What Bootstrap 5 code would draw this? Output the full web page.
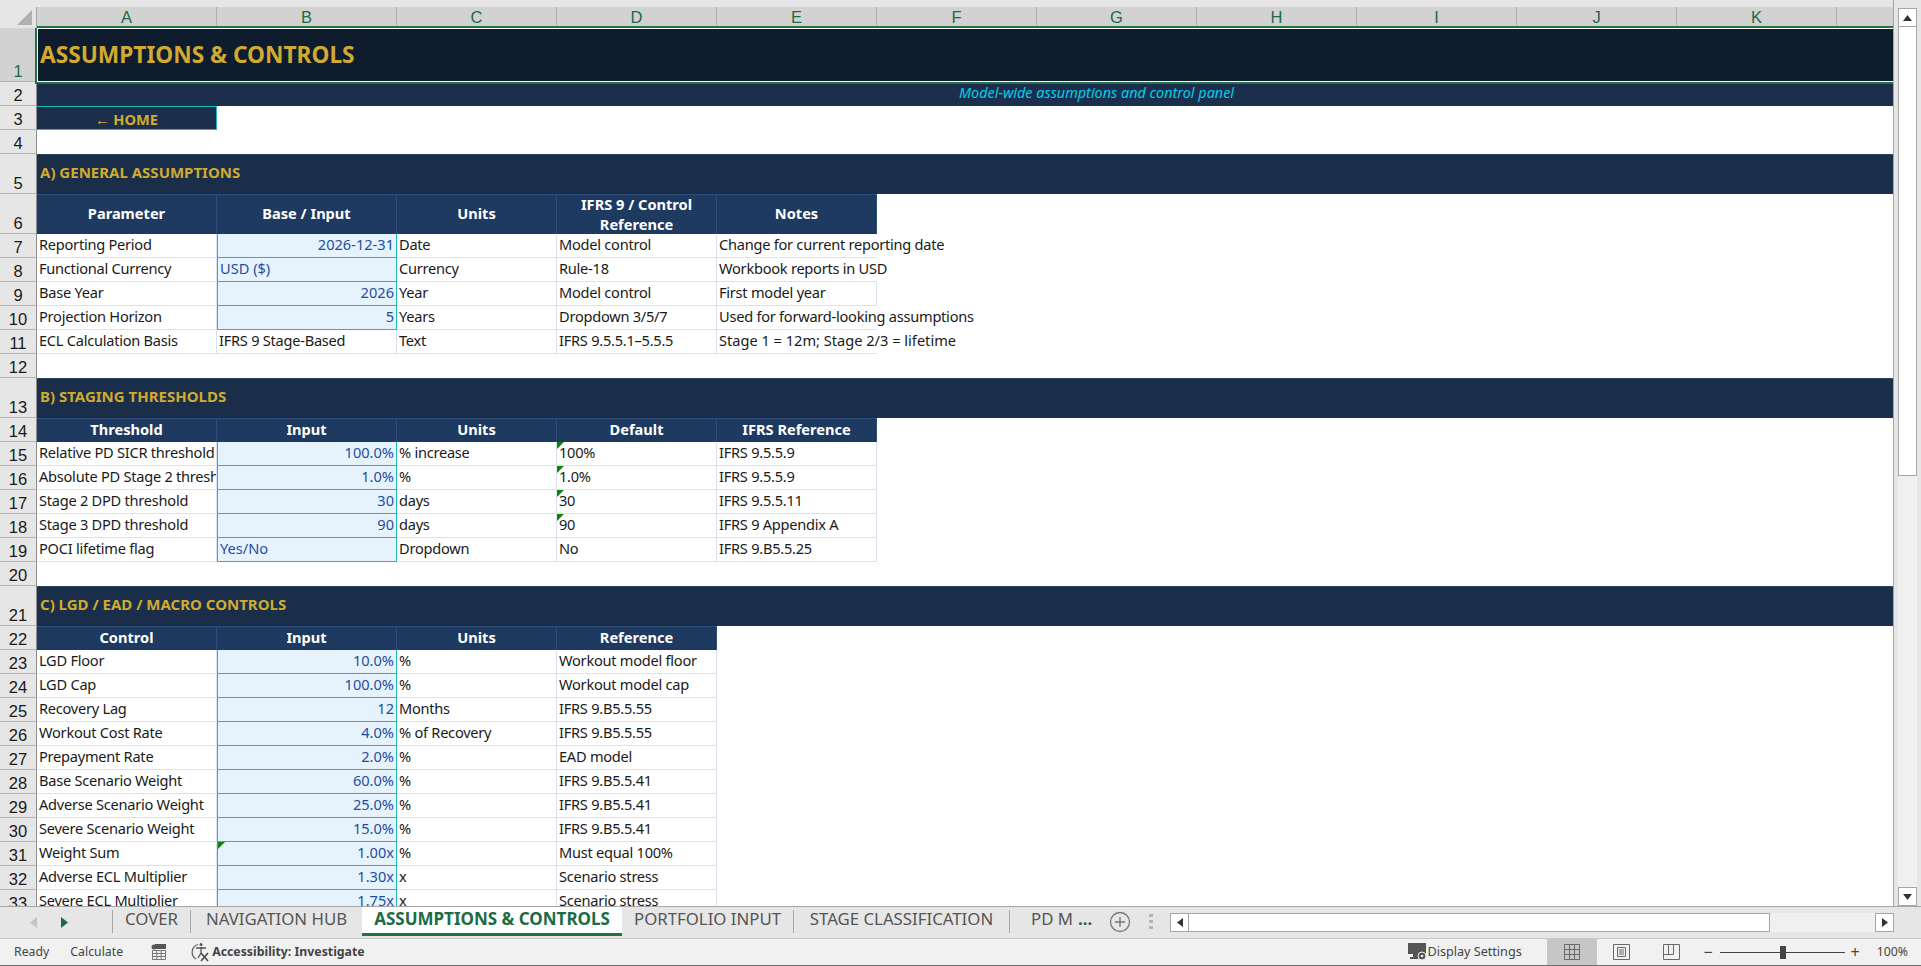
<!DOCTYPE html>
<html lang="en">
<head>
<meta charset="UTF-8">
<title>Assumptions &amp; Controls</title>
<link href="https://cdn.jsdelivr.net/npm/bootstrap@5.3.0/dist/css/bootstrap.min.css" rel="stylesheet">
<style>
    html, body { height: 966px; overflow: hidden; }
    body { background: #e6e6e6; font-family: "Noto Sans", "Liberation Sans", sans-serif; font-size: 14.6px; color: #1a1a1a; }
    .sheet-wrap { height: 906px; width: 1894px; overflow: hidden; background: #fff; border-right: 1px solid #a6a6a6; }
    .top-strip { height: 7px; background: #e6e6e6; }
    .sheet { table-layout: fixed; width: 1894px; border-collapse: separate; border-spacing: 0; }
    .sheet td, .sheet th { padding: 0 2px 1px; white-space: nowrap; height: 24px; vertical-align: middle; }
    .sheet td { font-weight: 400; }
    .ch { height: 21px !important; background: #d2d2d2; color: #1c6b45; font: 400 16.5px "Liberation Sans", sans-serif; text-align: center; border-right: 1px solid #b0b0b0; }
    .corner { background: #e6e6e6; border-right: 1px solid #a6a6a6; position: relative; }
    .corner::after { content: ""; position: absolute; right: 4px; bottom: 3px; border-style: solid; border-width: 0 0 15px 15px; border-color: transparent transparent #b0b0b0 transparent; }
    .rh { background: #e6e6e6; color: #1a1a1a; font: 400 16.5px "Liberation Sans", sans-serif; text-align: center; vertical-align: bottom !important; padding: 0 !important; border-right: 1px solid #8e8e8e; border-bottom: 1px solid #b4b4b4; line-height: 20px; }
    .rh-on { background: #d2d2d2; color: #1c6b45; }
    .r54 td, .r54 th { height: 54px; }
    .r40 td, .r40 th { height: 40px; }
    .sheet .ttl { background: #0f1c2e; color: #d1aa30; font-weight: 700; font-size: 22.7px; box-shadow: inset 0 0 0 1px #fff; outline: 2px solid #217346; padding-left: 3px; padding-bottom: 0; }
    .sheet .sub { background: #1b2f4d; color: #00d0e8; font-style: italic; font-size: 14.4px; line-height: 20px; text-align: center; padding-left: 262px; padding-right: 0; padding-bottom: 3px; }
    .sheet .home { background: #1b2f4d; color: #d1aa30; font-weight: 700; text-align: center; vertical-align: bottom; line-height: 20px; padding-bottom: 0; border-right: 1px solid #1abcbc; border-bottom: 1px solid #1abcbc; box-shadow: inset 0 1px 0 #1abcbc; }
    .sheet .sec { background: #1a2e4a; color: #d1aa30; font-weight: 700; font-size: 15px; padding-left: 3px; padding-bottom: 4px; box-shadow: inset 0 1px 0 #2b4263; }
    .sheet .hd { background: #1f3a60; color: #fff; font-weight: 700; text-align: center; border-right: 1px solid #2f4f7a; box-shadow: inset 0 1px 0 #2f4f7a; line-height: 20px; white-space: normal; padding-bottom: 2px; }
    .sheet .hd-two { padding-bottom: 0; }
    .tx { border-right: 1px solid #d9e2f3; border-bottom: 1px solid #d9e2f3; letter-spacing: -0.25px; }
    .nosp { letter-spacing: 0; }
    .clip { overflow: hidden; text-overflow: clip; }
    .open { border-right: 0; }
    .inp { background: #e6f3fd; color: #1f4ea1; border: 1px solid #1abcbc; border-width: 0 1px 1px 1px; text-align: right; }
    .inp-l { text-align: left; }
    .flag { position: relative; }
    .flag::before { content: ""; position: absolute; left: 0; top: 0; border-style: solid; border-width: 7px 7px 0 0; border-color: #0a860a transparent transparent transparent; }

    .vscroll { width: 27px; height: 906px; background: #e6e6e6; padding: 8px 4px 0 4px; }
    .vtrack { height: 898px; background: #f0f0f0; }
    .sb-btn { width: 19px; height: 19px; background: #fff; border: 1px solid #a6a6a6; flex: none; }
    .sb-thumb { background: #fff; border: 1px solid #a6a6a6; border-top: 0; height: 449px; }

    .tabbar { height: 33px; background: #e6e6e6; border-top: 1px solid #a6a6a6; border-bottom: 1px solid #c6c6c6; }
    .tab-nav { width: 112px; height: 30px; padding-left: 30px; gap: 24px; }
    .tab-item { height: 23px; margin-top: 3px; font-size: 16.8px; color: #555; line-height: 17px; border-right: 1px solid #a6a6a6; text-align: center; flex: none; }
    .tab-on { height: 29px; margin-top: 0; background: #fff; color: #1c6b45; font-weight: 700; font-size: 17px; border-right: 0; border-bottom: 3px solid #217346; line-height: 24px; }
    .tab-cover { width: 79px; border-left: 1px solid #a6a6a6; }
    .tab-hub { width: 171px; border-right: 0; }
    .tab-act { width: 260px; }
    .tab-port { width: 172px; }
    .tab-stage { width: 216px; }
    .tab-pd { width: 98px; padding-left: 21px; border-right: 0; text-align: left; }
    .more { color: #1c6b45; font-weight: 700; margin-left: 5px; }
    .tab-add { margin-top: 3px; }
    .tab-dots { margin: 7px 0 0 17px; }
    .hscroll { width: 724px; height: 19px; margin: 6px 0 0 17px; background: #f0f0f0; }
    .hthumb { width: 581px; height: 19px; background: #fff; border: 1px solid #a6a6a6; border-left: 0; }

    .statusbar { height: 27px; padding-right: 13px; background: #f1f1f1; border-bottom: 1px solid #6e6e6e; font-size: 12.3px; color: #444; }
    .st-ready { margin-left: 14px; }
    .st-calc { margin-left: 21px; }
    .st-ico1 { margin-left: 28px; }
    .st-ico2 { margin-left: 23px; }
    .st-acc { margin-left: 2px; }
    .st-disp { font-size: 12.6px; margin-right: 25px; }
    .view-on, .view-btn { width: 50px; height: 26px; }
    .view-on { background: #c6c6c6; }
    .zm { width: 23px; font-size: 16px; text-align: center; }
    .zm-plus { width: 21px; }
    .zoom-track { width: 125px; height: 1px; background: #444; position: relative; }
    .zoom-knob { position: absolute; left: 60px; top: -6px; width: 6px; height: 13px; background: #444; }
    .zoom-pct { margin-left: 11px; }
</style>
</head>
<body class="d-flex flex-column">

<div class="d-flex">
    <div class="sheet-wrap">
        <div class="top-strip"></div>
        <table class="sheet">
            <colgroup>
                <col style="width:37px"><col style="width:180px"><col style="width:180px">
                <col style="width:160px"><col style="width:160px"><col style="width:160px">
                <col style="width:160px"><col style="width:160px"><col style="width:160px">
                <col style="width:160px"><col style="width:160px"><col style="width:160px"><col>
            </colgroup>
            <tr>
                <th class="ch corner"></th><th class="ch">A</th><th class="ch">B</th><th class="ch">C</th><th class="ch">D</th><th class="ch">E</th><th class="ch">F</th><th class="ch">G</th><th class="ch">H</th><th class="ch">I</th><th class="ch">J</th><th class="ch">K</th><th class="ch"></th>
            </tr>
            <tr class="r54"><th class="rh rh-on">1</th><td colspan="12" class="ttl">ASSUMPTIONS &amp; CONTROLS</td></tr>
            <tr><th class="rh">2</th><td colspan="12" class="sub">Model-wide assumptions and control panel</td></tr>
            <tr><th class="rh">3</th><td class="home">← HOME</td><td colspan="11"></td></tr>
            <tr><th class="rh">4</th><td colspan="12"></td></tr>

            <tr class="r40"><th class="rh">5</th><td colspan="12" class="sec">A) GENERAL ASSUMPTIONS</td></tr>
            <tr class="r40"><th class="rh">6</th><td class="hd">Parameter</td><td class="hd">Base / Input</td><td class="hd">Units</td><td class="hd hd-two">IFRS 9 / Control Reference</td><td class="hd">Notes</td><td colspan="7"></td></tr>
            <tr><th class="rh">7</th><td class="tx">Reporting Period</td><td class="inp">2026-12-31</td><td class="tx">Date</td><td class="tx">Model control</td><td class="tx open">Change for current reporting date</td><td colspan="7"></td></tr>
            <tr><th class="rh">8</th><td class="tx">Functional Currency</td><td class="inp inp-l">USD ($)</td><td class="tx">Currency</td><td class="tx">Rule-18</td><td class="tx open">Workbook reports in USD</td><td colspan="7"></td></tr>
            <tr><th class="rh">9</th><td class="tx">Base Year</td><td class="inp">2026</td><td class="tx">Year</td><td class="tx">Model control</td><td class="tx">First model year</td><td colspan="7"></td></tr>
            <tr><th class="rh">10</th><td class="tx">Projection Horizon</td><td class="inp">5</td><td class="tx">Years</td><td class="tx">Dropdown 3/5/7</td><td class="tx open">Used for forward-looking assumptions</td><td colspan="7"></td></tr>
            <tr><th class="rh">11</th><td class="tx">ECL Calculation Basis</td><td class="tx">IFRS 9 Stage-Based</td><td class="tx">Text</td><td class="tx">IFRS 9.5.5.1–5.5.5</td><td class="tx open nosp">Stage 1 = 12m; Stage 2/3 = lifetime</td><td colspan="7"></td></tr>
            <tr><th class="rh">12</th><td colspan="12"></td></tr>

            <tr class="r40"><th class="rh">13</th><td colspan="12" class="sec">B) STAGING THRESHOLDS</td></tr>
            <tr><th class="rh">14</th><td class="hd">Threshold</td><td class="hd">Input</td><td class="hd">Units</td><td class="hd">Default</td><td class="hd">IFRS Reference</td><td colspan="7"></td></tr>
            <tr><th class="rh">15</th><td class="tx clip">Relative PD SICR threshold</td><td class="inp">100.0%</td><td class="tx">% increase</td><td class="tx flag">100%</td><td class="tx">IFRS 9.5.5.9</td><td colspan="7"></td></tr>
            <tr><th class="rh">16</th><td class="tx clip">Absolute PD Stage 2 threshold</td><td class="inp">1.0%</td><td class="tx">%</td><td class="tx flag">1.0%</td><td class="tx">IFRS 9.5.5.9</td><td colspan="7"></td></tr>
            <tr><th class="rh">17</th><td class="tx">Stage 2 DPD threshold</td><td class="inp">30</td><td class="tx">days</td><td class="tx flag">30</td><td class="tx">IFRS 9.5.5.11</td><td colspan="7"></td></tr>
            <tr><th class="rh">18</th><td class="tx">Stage 3 DPD threshold</td><td class="inp">90</td><td class="tx">days</td><td class="tx flag">90</td><td class="tx">IFRS 9 Appendix A</td><td colspan="7"></td></tr>
            <tr><th class="rh">19</th><td class="tx">POCI lifetime flag</td><td class="inp inp-l">Yes/No</td><td class="tx">Dropdown</td><td class="tx">No</td><td class="tx">IFRS 9.B5.5.25</td><td colspan="7"></td></tr>
            <tr><th class="rh">20</th><td colspan="12"></td></tr>

            <tr class="r40"><th class="rh">21</th><td colspan="12" class="sec">C) LGD / EAD / MACRO CONTROLS</td></tr>
            <tr><th class="rh">22</th><td class="hd">Control</td><td class="hd">Input</td><td class="hd">Units</td><td class="hd">Reference</td><td colspan="8"></td></tr>
            <tr><th class="rh">23</th><td class="tx">LGD Floor</td><td class="inp">10.0%</td><td class="tx">%</td><td class="tx">Workout model floor</td><td colspan="8"></td></tr>
            <tr><th class="rh">24</th><td class="tx">LGD Cap</td><td class="inp">100.0%</td><td class="tx">%</td><td class="tx">Workout model cap</td><td colspan="8"></td></tr>
            <tr><th class="rh">25</th><td class="tx">Recovery Lag</td><td class="inp">12</td><td class="tx">Months</td><td class="tx">IFRS 9.B5.5.55</td><td colspan="8"></td></tr>
            <tr><th class="rh">26</th><td class="tx">Workout Cost Rate</td><td class="inp">4.0%</td><td class="tx">% of Recovery</td><td class="tx">IFRS 9.B5.5.55</td><td colspan="8"></td></tr>
            <tr><th class="rh">27</th><td class="tx">Prepayment Rate</td><td class="inp">2.0%</td><td class="tx">%</td><td class="tx">EAD model</td><td colspan="8"></td></tr>
            <tr><th class="rh">28</th><td class="tx">Base Scenario Weight</td><td class="inp">60.0%</td><td class="tx">%</td><td class="tx">IFRS 9.B5.5.41</td><td colspan="8"></td></tr>
            <tr><th class="rh">29</th><td class="tx">Adverse Scenario Weight</td><td class="inp">25.0%</td><td class="tx">%</td><td class="tx">IFRS 9.B5.5.41</td><td colspan="8"></td></tr>
            <tr><th class="rh">30</th><td class="tx">Severe Scenario Weight</td><td class="inp">15.0%</td><td class="tx">%</td><td class="tx">IFRS 9.B5.5.41</td><td colspan="8"></td></tr>
            <tr><th class="rh">31</th><td class="tx">Weight Sum</td><td class="inp flag">1.00x</td><td class="tx">%</td><td class="tx">Must equal 100%</td><td colspan="8"></td></tr>
            <tr><th class="rh">32</th><td class="tx">Adverse ECL Multiplier</td><td class="inp">1.30x</td><td class="tx">x</td><td class="tx">Scenario stress</td><td colspan="8"></td></tr>
            <tr><th class="rh">33</th><td class="tx">Severe ECL Multiplier</td><td class="inp">1.75x</td><td class="tx">x</td><td class="tx">Scenario stress</td><td colspan="8"></td></tr>
        </table>
    </div>

    <div class="vscroll">
        <div class="vtrack d-flex flex-column justify-content-between">
            <div>
                <div class="sb-btn d-flex align-items-center justify-content-center">
                    <svg width="9" height="6" viewBox="0 0 9 6"><path d="M4.5 0 9 6H0z" fill="#333"/></svg>
                </div>
                <div class="sb-thumb"></div>
            </div>
            <div class="sb-btn d-flex align-items-center justify-content-center">
                <svg width="9" height="6" viewBox="0 0 9 6"><path d="M0 0h9L4.500 6z" fill="#333"/></svg>
            </div>
        </div>
    </div>
</div>

<div class="tabbar d-flex align-items-start">
    <div class="tab-nav d-flex align-items-center">
        <svg width="7" height="11" viewBox="0 0 7 11"><path d="M7 0v11L0 5.500z" fill="#c4c4c4"/></svg>
        <svg width="7" height="11" viewBox="0 0 7 11"><path d="M0 0v11l7-5.500z" fill="#1c6b45"/></svg>
    </div>
    <div class="tab-item tab-cover">COVER</div>
    <div class="tab-item tab-hub">NAVIGATION HUB</div>
    <div class="tab-item tab-on tab-act">ASSUMPTIONS &amp; CONTROLS</div>
    <div class="tab-item tab-port">PORTFOLIO INPUT</div>
    <div class="tab-item tab-stage">STAGE CLASSIFICATION</div>
    <div class="tab-item tab-pd">PD M<span class="more">...</span></div>
    <svg class="tab-add" width="24" height="24" viewBox="0 0 24 24"><circle cx="12" cy="12" r="9.500" fill="none" stroke="#777" stroke-width="1.300"/><path d="M12 7v10M7 12h10" stroke="#777" stroke-width="1.300"/></svg>
    <svg class="tab-dots" width="4" height="16" viewBox="0 0 4 16"><path d="M0 0h4v3H0zM0 6h4v3H0zM0 12h4v3H0z" fill="#b4b4b4"/></svg>
    <div class="hscroll d-flex">
        <div class="sb-btn d-flex align-items-center justify-content-center">
            <svg width="6" height="9" viewBox="0 0 6 9"><path d="M6 0v9L0 4.500z" fill="#333"/></svg>
        </div>
        <div class="hthumb"></div>
        <div class="sb-btn ms-auto d-flex align-items-center justify-content-center">
            <svg width="6" height="9" viewBox="0 0 6 9"><path d="M0 0v9l6-4.500z" fill="#333"/></svg>
        </div>
    </div>
</div>

<div class="statusbar d-flex align-items-center">
    <span class="st-ready">Ready</span>
    <span class="st-calc">Calculate</span>
    <svg class="st-ico1" width="16" height="16" viewBox="0 0 16 16"><rect x="4" y="0" width="11" height="5" fill="#555"/><circle cx="3" cy="3" r="2.500" fill="#555"/><path d="M1.500 6.500h13v9h-13zM1.500 9.500h13M1.500 12.500h13M5.800 6.500v9M10.200 6.500v9" fill="none" stroke="#777"/></svg>
    <svg class="st-ico2" width="20" height="20" viewBox="0 0 20 20"><path d="M8 2.500A8 8 0 0 0 6 17" fill="none" stroke="#666" stroke-width="1.300"/><circle cx="11" cy="2.500" r="1.500" fill="#555"/><path d="M6 6h10M11 5v6l-3 5" fill="none" stroke="#555" stroke-width="1.300"/><path d="M11 11l7 8M18 11l-7 8" fill="none" stroke="#444" stroke-width="1.500"/></svg>
    <b class="st-acc">Accessibility: Investigate</b>
    <svg class="ms-auto" width="20" height="20" viewBox="0 0 20 20"><path d="M0 1h18v11h-7l-1 5H2v-2h3v-3H0z" fill="#555"/><circle cx="14" cy="14" r="4" fill="#555" stroke="#f1f1f1"/><circle cx="14" cy="14" r="1.300" fill="#f1f1f1"/></svg>
    <span class="st-disp">Display Settings</span>
    <div class="view-on d-flex align-items-center justify-content-center">
        <svg width="16" height="16" viewBox="0 0 16 16"><path d="M.5.5h15v15H.5zM.5 5.500h15M.5 10.500h15M5.500.5v15M10.500.5v15" fill="none" stroke="#6a6a6a"/></svg>
    </div>
    <div class="view-btn d-flex align-items-center justify-content-center">
        <svg width="17" height="16" viewBox="0 0 17 16"><path d="M.5.5h16v15H.5z M4.500 3.500h8v9h-8zM6 6h5M6 8h5M6 10h5" fill="none" stroke="#6a6a6a"/></svg>
    </div>
    <div class="view-btn d-flex align-items-center justify-content-center">
        <svg width="17" height="16" viewBox="0 0 17 16"><path d="M.5.5h16v15H.5zM.5 10.500h10V.5M5.500.5v10" fill="none" stroke="#6a6a6a"/></svg>
    </div>
    <span class="zm">−</span>
    <div class="zoom-track"><div class="zoom-knob"></div></div>
    <span class="zm zm-plus">+</span>
    <span class="zoom-pct">100%</span>
</div>

</body>
</html>
